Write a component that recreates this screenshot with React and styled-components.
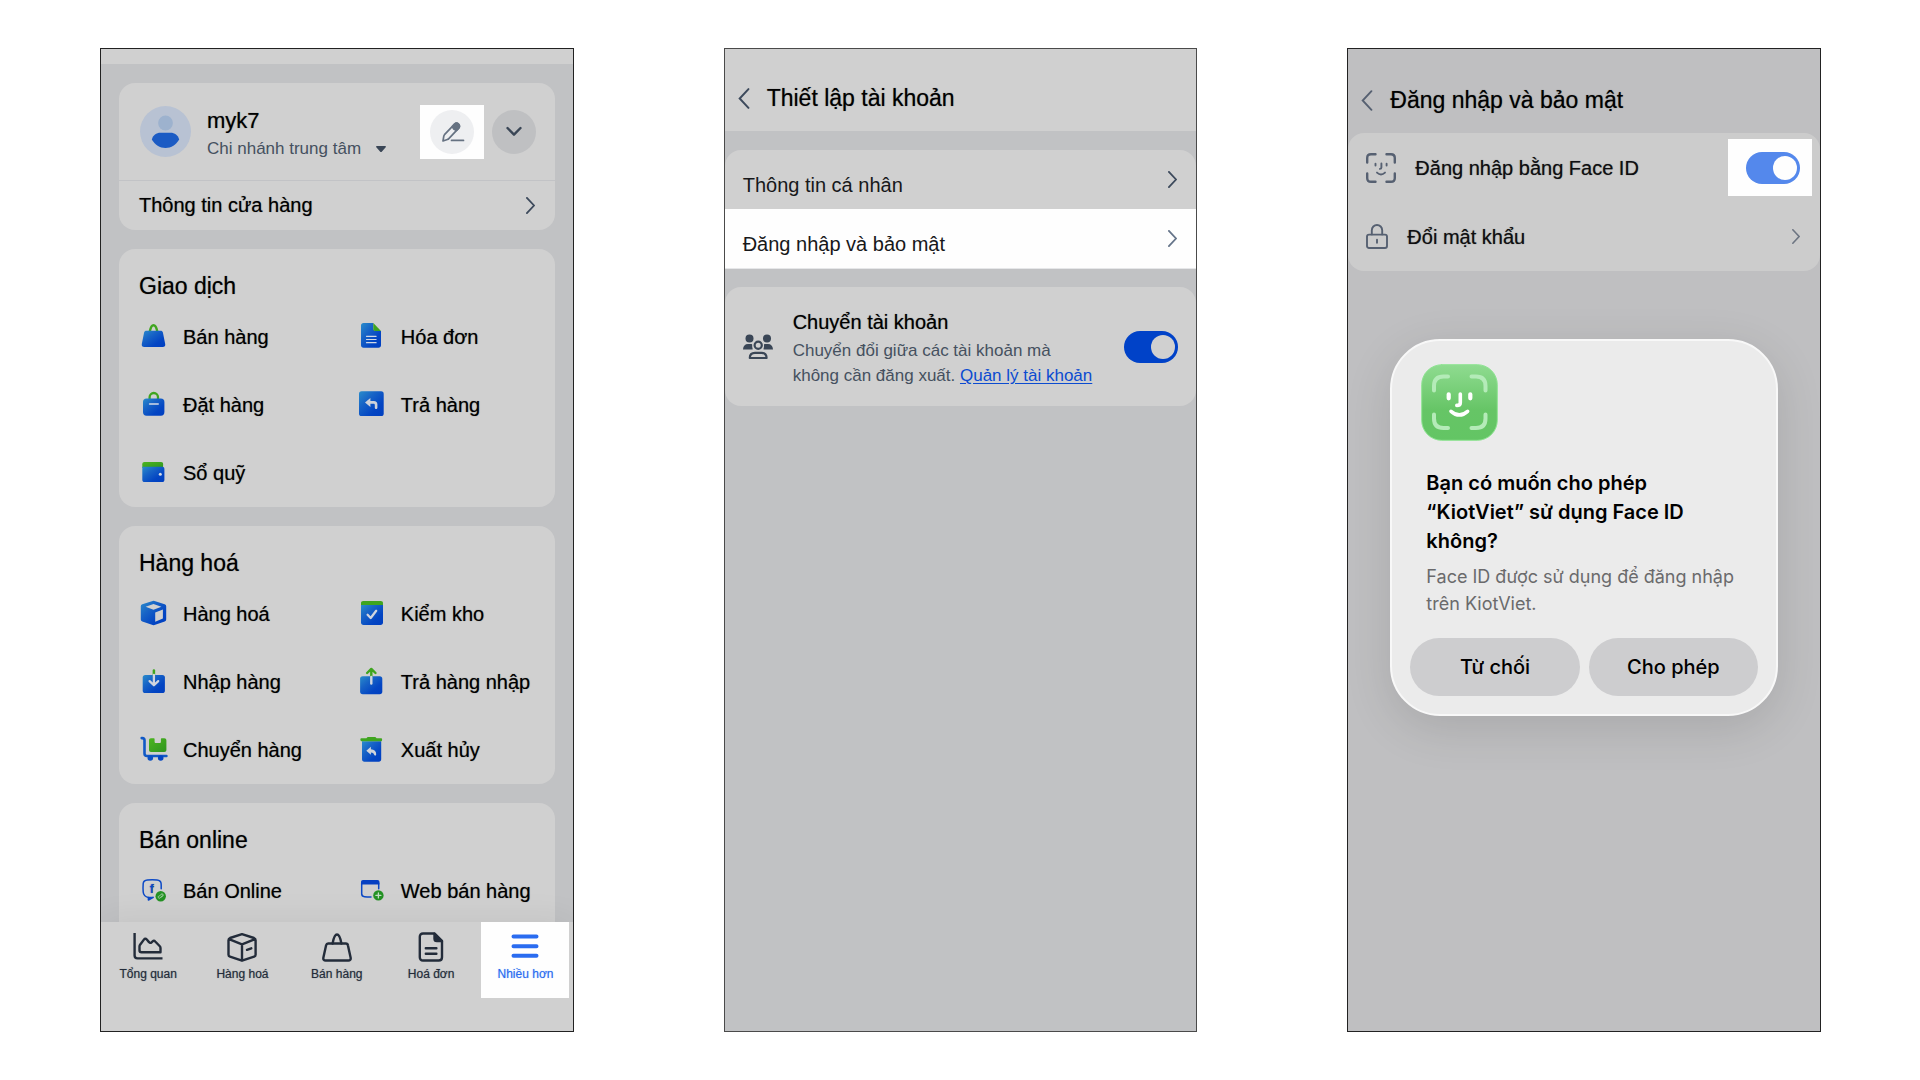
import React, { useState } from 'react';
import styled, { createGlobalStyle, css } from 'styled-components';

const GlobalStyle = createGlobalStyle`
  * {
    box-sizing: border-box;
  }

  body {
    margin: 0;
    background: #fff;
    font-family: 'Liberation Sans', Arial, sans-serif;
    color: #000;
  }

  button {
    font-family: inherit;
    color: inherit;
    border: 0;
    padding: 0;
    background: none;
    cursor: pointer;
  }

  a {
    color: inherit;
    text-decoration: none;
  }

  h1, h2, p {
    margin: 0;
    font-weight: 400;
  }

  svg {
    display: block;
    flex-shrink: 0;
  }
`;

const medium = css`
  text-shadow: 0 0 1px rgba(0, 0, 0, 0.5);
`;

const Page = styled.div`
  display: flex;
  gap: 150px;
  height: 100vh;
  padding: 48px 99px 48px 100px;
`;

const Phone = styled.section`
  flex: 1;
  min-width: 0;
  display: flex;
  flex-direction: column;
  overflow: hidden;
  border: 1px solid ${({ $edge }) => $edge || '#4a4a4a'};
  background: ${({ $tone }) => $tone || '#c1c2c4'};
`;

/* store menu */

const StatusStrip = styled.div`
  flex-shrink: 0;
  height: 15px;
  background: #d0d0d0;
`;

const Scroll = styled.main`
  flex: 1;
  min-height: 0;
  overflow: hidden;
  display: flex;
  flex-direction: column;
  gap: 19px;
  padding: 19px 18px 0;
`;

const Card = styled.section`
  flex-shrink: 0;
  border-radius: 16px;
  background: #d0d0d0;
`;

const GroupCard = styled(Card)`
  min-height: 258px;
`;

const Profile = styled.div`
  display: flex;
  align-items: center;
  height: 98px;
  padding: 0 19px 0 21px;
  border-bottom: 1px solid #c2c3c6;
`;

const ProfileText = styled.div`
  flex: 1;
  padding: 6px 0 0 16px;
`;

const UserName = styled.h1`
  ${medium}
  font-size: 22px;
  line-height: 28px;
`;

const Branch = styled.button`
  display: flex;
  align-items: center;
  gap: 15px;
  font-size: 17px;
  line-height: 28px;
  color: #45505f;
`;

const Spotlight = styled.div`
  display: flex;
  align-items: center;
  justify-content: center;
  width: 64px;
  height: 54px;
  background: #fefefe;
`;

const SwitchSpotlight = styled(Spotlight)`
  width: 84px;
  height: 57px;
  padding-left: 6px;
`;

const RoundButton = styled.button`
  width: 44px;
  height: 44px;
  border-radius: 50%;
  background: ${({ $light }) => ($light ? '#eeeff1' : '#bfc0c2')};
`;

const ProfileActions = styled.div`
  display: flex;
  align-items: center;
  gap: 8px;
`;

const StoreInfo = styled.a`
  ${medium}
  display: flex;
  align-items: center;
  justify-content: space-between;
  height: 49px;
  padding: 0 20px;
  font-size: 20px;
`;

const GroupTitle = styled.h2`
  ${medium}
  padding: 21px 20px 0;
  font-size: 23px;
  line-height: 33px;
`;

const Grid = styled.div`
  display: grid;
  grid-template-columns: 1fr 1fr;
  grid-auto-rows: 68px;
`;

const Item = styled.a`
  ${medium}
  display: flex;
  align-items: center;
  gap: 14px;
  padding-left: 20px;
  font-size: 20px;
  white-space: nowrap;
`;

const TabBar = styled.nav`
  flex-shrink: 0;
  display: flex;
  height: 109px;
  background: #d0d0d0;
  box-shadow: 0 0 32px rgba(0, 0, 0, 0.08);
`;

const TabCell = styled.div`
  flex: 1;
  display: flex;
  justify-content: center;
`;

const Tab = styled.a`
  display: flex;
  flex-direction: column;
  align-items: center;
  gap: 4px;
  width: 88px;
  height: 76px;
  padding-top: 10px;
  font-size: 12px;
  line-height: 16px;
  color: ${({ $active }) => ($active ? '#2a6cf0' : '#232c3a')};
  background: ${({ $active }) => ($active ? '#fefefe' : 'none')};
  text-shadow: 0 0 1px ${({ $active }) => ($active ? 'rgba(42, 108, 240, 0.5)' : 'rgba(35, 44, 58, 0.5)')};
`;

/* settings screens */

const Header = styled.header`
  flex-shrink: 0;
  display: flex;
  align-items: center;
  gap: 17px;
  height: ${({ $plain }) => ($plain ? 84 : 82)}px;
  padding: ${({ $plain }) => ($plain ? 18 : 16)}px 13px 0;
  background: ${({ $plain }) => ($plain ? 'none' : '#d0d0d0')};
`;

const HeaderTitle = styled.h1`
  ${medium}
  font-size: 23px;
  line-height: 32px;
`;

const Settings = styled.main`
  display: flex;
  flex-direction: column;
  gap: 18px;
  padding-top: 19px;
`;

const Panel = styled.section`
  overflow: hidden;
  border-radius: ${({ $open }) => ($open ? '16px 16px 0 0' : '16px')};
  background: ${({ $tone }) => $tone || '#d0d0d0'};
`;

const LinkRow = styled.a`
  display: flex;
  align-items: center;
  justify-content: space-between;
  height: ${({ $lit }) => ($lit ? 60 : 59)}px;
  padding: 0 19px 0 18px;
  font-size: 20px;
  color: #17181a;
  background: ${({ $lit }) => ($lit ? '#fefefe' : 'none')};
  border-bottom: ${({ $lit }) => ($lit ? '1px solid #e6e7e9' : '0')};
`;

const LinkLabel = styled.span`
  padding-top: 11px;
`;

const SwitchAccount = styled.div`
  display: flex;
  align-items: center;
  gap: 20px;
  padding: 19px 18px 18px;
`;

const SwitchText = styled.div`
  flex: 1;
  font-size: 17px;
  line-height: 25px;
  color: #45505f;
`;

const SwitchTitle = styled.label`
  ${medium}
  display: block;
  font-size: 20px;
  line-height: 32px;
  color: #000;
`;

const ManageLink = styled.a`
  color: #0b4bd0;
  text-decoration: underline;
  text-underline-offset: 2px;
`;

const Toggle = styled.input.attrs({ type: 'checkbox', role: 'switch' })`
  appearance: none;
  display: flex;
  align-items: center;
  justify-content: ${({ checked }) => (checked ? 'flex-end' : 'flex-start')};
  width: 54px;
  height: 32px;
  margin: 0;
  padding: 0 3px;
  border-radius: 16px;
  background: ${({ $color }) => $color};
  cursor: pointer;

  &::before {
    content: '';
    width: 24px;
    height: 24px;
    border-radius: 50%;
    background: ${({ $knob }) => $knob};
  }
`;

const SecurityRow = styled.div`
  display: flex;
  align-items: center;
  gap: 19px;
  height: 69px;
  padding: 0 ${({ $tight }) => ($tight ? 8 : 20)}px 0 18px;
  font-size: 20px;
  color: #0e0e10;
`;

const SecurityLabel = styled.label`
  ${medium}
  flex: 1;
  padding-top: 2px;
`;

const PasswordLink = styled(SecurityRow).attrs({ as: 'a', href: '#doi-mat-khau' })``;

/* permission dialog */

const Dialog = styled.div`
  margin: 68px 42px 0;
  padding: 23px 18px 18px;
  border: 2px solid #f8f8f8;
  border-radius: 50px;
  background: #ebebeb;
  box-shadow: 0 12px 48px rgba(0, 0, 0, 0.12);
  font-family: Inter, sans-serif;
`;

const AppIcon = styled.div`
  padding-left: 11px;
`;

const DialogTitle = styled.h2`
  padding: 28px 16px 0;
  font-size: 20px;
  font-weight: 600;
  line-height: 29px;
`;

const DialogText = styled.p`
  padding: 7px 16px 0;
  font-size: 18px;
  line-height: 27px;
  color: #6a6a6c;
`;

const DialogButtons = styled.div`
  display: flex;
  gap: 9px;
  padding-top: 21px;
`;

const DialogButton = styled.button`
  flex: 1;
  height: 58px;
  border-radius: 29px;
  background: #cdcdcf;
  font-size: 20px;
  font-weight: 500;
`;

/* icons */

const Defs = styled.svg.attrs({ width: 0, height: 0, 'aria-hidden': true })`
  position: absolute;
`;

const Gradients = () => (
  <Defs>
    <defs>
      <linearGradient id="blue" x1="0" y1="0" x2="1" y2="1">
        <stop offset="0" stopColor="#2a8ccb" />
        <stop offset="0.35" stopColor="#1763c6" />
        <stop offset="0.7" stopColor="#0345c3" />
        <stop offset="1" stopColor="#003fc0" />
      </linearGradient>
      <linearGradient id="green" x1="0" y1="0" x2="1" y2="1">
        <stop offset="0" stopColor="#4cb51f" />
        <stop offset="1" stopColor="#2f9420" />
      </linearGradient>
      <linearGradient id="faceId" x1="0" y1="0" x2="0" y2="1">
        <stop offset="0" stopColor="#8fdb90" />
        <stop offset="0.6" stopColor="#66c566" />
        <stop offset="1" stopColor="#63c564" />
      </linearGradient>
    </defs>
  </Defs>
);

const Icon = ({ size = 30, box = 30, children }) => (
  <svg width={size} height={size} viewBox={`0 0 ${box} ${box}`} fill="none" strokeLinecap="round" strokeLinejoin="round" aria-hidden="true">
    {children}
  </svg>
);

const Chevron = ({ width = 9, height = 17, back, color = '#3d4a5c', weight = 1.8 }) => (
  <svg width={width} height={height} viewBox="0 0 9 17" fill="none" stroke={color} strokeWidth={weight} strokeLinecap="round" aria-hidden="true">
    <path d={back ? 'M8.1 .9 1 8.500l7.100 7.600' : 'M.9 .9 8 8.500.9 16.100'} />
  </svg>
);

const itemIcons = {
  sell: (
    <>
      <path d="M10.800 9.500c.8-4 2-6.300 3.700-6.300s3 2.300 3.800 6.300" stroke="#3fa51f" strokeWidth="2.400" />
      <path d="M7.500 8.700h14c1.300 0 2.100.6 2.400 1.800l2.300 11.500c.4 2-.6 3-2.400 3H5.200c-1.800 0-2.800-1-2.400-3L5.100 10.500c.3-1.200 1.100-1.800 2.400-1.800z" fill="url(#blue)" />
    </>
  ),
  invoice: (
    <>
      <path d="M6.500 1h9.800v5.500c0 1.500 1 2.500 2.500 2.500H24v14.200c0 1.500-1 2.500-2.500 2.500h-15C5 25.700 4 24.700 4 23.200V3.500C4 2 5 1 6.500 1z" fill="url(#blue)" />
      <path d="M16.300 1 24 9h-6c-1.100 0-1.700-.6-1.700-1.700z" fill="#3fa51f" />
      <path d="M9.500 14.300h9.600M9.500 17.500h9.600M9.500 20.700h9.600" stroke="#cfd8e6" strokeWidth="1.200" />
    </>
  ),
  order: (
    <>
      <path d="M10.600 9.500V7.200a4.200 4.200 0 0 1 8.400 0v2.300" stroke="#3fa51f" strokeWidth="2.300" />
      <rect x="4" y="8.400" width="21.400" height="17.300" rx="3.600" fill="url(#blue)" />
      <path d="M10.600 14h8.600" stroke="#d3dae6" strokeWidth="1.600" />
    </>
  ),
  giveBack: (
    <>
      <rect x="2" y="1.300" width="24.700" height="24.700" rx="2.600" fill="url(#blue)" />
      <path d="M8 12.500 13.400 8v3h3.400c2.400 0 3.600 1.200 3.600 3.600v3.200c0 1.700-2.600 1.700-2.600 0v-2.600c0-1-.4-1.400-1.400-1.400h-3v3.200z" fill="#d0d3da" />
    </>
  ),
  fund: (
    <>
      <path d="M5.500 4h16.700c1.200 0 1.900.7 1.900 1.900v4H3.300V6.200C3.300 4.800 4.100 4 5.500 4z" fill="url(#green)" />
      <path d="M3.300 8.700h19.900c1.400 0 2.200.8 2.200 2.200v10.800c0 1.500-.8 2.300-2.200 2.300H5.500c-1.400 0-2.200-.8-2.200-2.300z" fill="url(#blue)" />
      <circle cx="21.300" cy="16.300" r="1.500" fill="#d6dce6" />
    </>
  ),
  goods: (
    <>
      <path d="M13.700 1.900q.9-.3 1.800 0l10.200 3.300q1.500.6 1.500 2.100v13.300q0 1.500-1.500 2L15.500 26q-.9.3-1.800 0L3.300 22.600q-1.500-.5-1.500-2V7.300q0-1.500 1.500-2.100z" fill="url(#blue)" />
      <path d="M14.500 4.900 22.400 7.700l-7.900 3.100-7.900-3.100zM16.200 13.600l7.700-3v9l-7.700 3.100z" fill="#d0d0d0" />
    </>
  ),
  check: (
    <>
      <path d="M4 5.700h22v17.800c0 1.600-.9 2.500-2.500 2.500h-17C4.900 26 4 25.100 4 23.500z" fill="url(#blue)" />
      <path d="M6.300 2h17.400C25.200 2 26 2.800 26 4.200v1.700H4V4.200C4 2.800 4.800 2 6.300 2z" fill="#3fa51f" />
      <path d="m10.600 15.800 3.100 3.200 5.500-7.200" stroke="#d0d5df" strokeWidth="2.300" />
    </>
  ),
  receive: (
    <>
      <rect x="3.700" y="8" width="22.200" height="18" rx="2.600" fill="url(#blue)" />
      <path d="M14.900 3.400V8" stroke="#3fa51f" strokeWidth="2.500" />
      <path d="M14.900 8v9.700m-4.300-3.600 4.300 4.200 4.300-4.200" stroke="#d0d5df" strokeWidth="2.300" />
    </>
  ),
  sendBack: (
    <>
      <rect x="3.100" y="9.200" width="22.200" height="18" rx="2.600" fill="url(#blue)" />
      <path d="M14.300 9.200V2m-4.200 4 4.200-4.100L18.500 6" stroke="#3fa51f" strokeWidth="2.400" />
      <path d="M14.300 10v6.600" stroke="#d0d5df" strokeWidth="2.400" />
    </>
  ),
  move: (
    <>
      <path d="M2.700 3.100h.6c1.400 0 2.200.8 2.200 2.200v13.200c0 1.700.8 2.500 2.500 2.500h19.400" stroke="#1159c6" strokeWidth="2.600" />
      <circle cx="11.300" cy="23" r="2.800" fill="#0a50c5" />
      <circle cx="21.700" cy="23" r="2.800" fill="#0345c3" />
      <path d="M12 3.300h2.600c.7 0 1 .4 1 1v2.400c0 .9.500 1.400 1.300 1.400h3.700c.8 0 1.300-.5 1.300-1.400V4.300c0-.6.3-1 1-1h2.300c1.400 0 2.200.8 2.200 2.200v9.300c0 1.400-.8 2.200-2.200 2.200H12c-1.300 0-2-.8-2-2.200V5.500c0-1.400.7-2.200 2-2.200z" fill="url(#green)" />
    </>
  ),
  discard: (
    <>
      <path d="M5 6.300h19.200v18c0 1.600-.9 2.400-2.400 2.400H7.400C5.900 26.700 5 25.900 5 24.300z" fill="url(#blue)" />
      <path d="M4.300 3.200h5.200c.4-.8.9-1.200 1.700-1.200h6.600c.8 0 1.300.4 1.700 1.200h4.700c.6 0 .9.4.9 1v.6c0 1-.5 1.500-1.500 1.500H5.300c-1 0-1.800-.6-1.900-1.600v-.5c0-.6.3-1 .9-1z" fill="#3fa51f" />
      <path d="m9.300 15.700 4.600-3.900v2.400c3.500.2 5.300 2 5.300 5.100 0 1.700-1.800 1.800-2.200.3-.3-1.300-1.300-2-3.100-2v2.200z" fill="#d0d3da" />
    </>
  ),
  online: (
    <>
      <path d="M14.200 21.300 9.400 24v-2.600c-3.600-.6-4.900-2-5.200-5.400-.3-3.200-.2-6 0-8.500.2-2.400 1.500-3.200 4.200-3.500 3.200-.4 6.400-.4 9.600 0 2.700.3 3.900 1.100 4.100 3.500.1 1.500.2 3.200.1 5.200" stroke="#0b49c6" strokeWidth="1.500" />
      <path d="M9 20.800h5.300L9.700 23.800z" fill="#0b49c6" />
      <text x="10.800" y="16.800" fontFamily="Liberation Sans, sans-serif" fontWeight="700" fontSize="12" fill="#0b49c6">f</text>
      <circle cx="21.700" cy="20.200" r="5.200" fill="#249224" />
      <path d="m20.300 20.200 1.700-1.900c1.300-1.300 3 .4 1.800 1.700l-1 1m.1-1.100-1.600 1.900c-1.300 1.300-3-.4-1.800-1.700" stroke="#a6d1a6" strokeWidth="1" />
    </>
  ),
  web: (
    <>
      <path d="M4.700 7v10.700c0 1.800.9 2.800 2.800 3 2.200.2 4.200.2 6.500.2M21.700 7v5.700" stroke="#0b49c6" strokeWidth="1.500" />
      <path d="M6 4h14.500c1.200 0 1.900.7 1.900 1.900v2.500H4V6c0-1.300.7-2 2-2z" fill="#0640c2" />
      <circle cx="21.400" cy="19.400" r="5.200" fill="#249224" />
      <path d="M18.900 19.400h5M21.400 16.900v5" stroke="#c3ddc3" strokeWidth="1.300" />
    </>
  ),
};

const tabIcons = {
  overview: (
    <g stroke="currentColor" strokeWidth="2.400" strokeLinecap="butt">
      <path d="M1.600 1v22.500c0 2 .9 2.900 2.900 2.900h25" />
      <path d="M6.500 14.600c0-.8.200-1.300.6-1.900l3.800-5.100c.9-1.200 1.900-1.200 2.900-.1l2.200 2.600c.8 1 1.700 1 2.600.2l1-.9c1-.9 1.700-.9 2.600.1l4.400 4.500c.6.600.9 1.100.9 1.900v4.300h-19c-1.400 0-2-.6-2-2z" />
    </g>
  ),
  goods: (
    <g stroke="currentColor" strokeWidth="2.400">
      <path d="M15 2.200 27 6q1.600.6 1.600 2.200v14.500q0 1.500-1.500 2L15 28.700 3 24.700q-1.500-.5-1.500-2V8.200Q1.500 6.600 3 6zM2 7.200l13 5.100 13-5.100M15 12.300v16.200" />
      <path d="m20 17.800 4.300-1.500" />
    </g>
  ),
  sell: (
    <g stroke="currentColor" strokeWidth="2.400">
      <path d="M6.200 11.500h17.600c1.200 0 1.900.5 2.100 1.700l2.700 12.400c.4 1.900-.5 2.900-2.300 2.900H3.700c-1.800 0-2.700-1-2.300-2.900l2.700-12.400c.3-1.200 1-1.700 2.100-1.700z" />
      <path d="M10.600 11.500c1-5.600 2.300-9 4.400-9s3.400 3.400 4.400 9" />
    </g>
  ),
  invoice: (
    <g stroke="currentColor" strokeWidth="2.400">
      <path d="M7 1.500h11.500L26 9v16.200c0 2.100-1.200 3.300-3.300 3.300H7c-2 0-3.200-1.200-3.200-3.300V4.800C3.800 2.700 5 1.500 7 1.500z" />
      <path d="M18.500 1.700v5c0 1.500.9 2.300 2.300 2.300H26z" fill="currentColor" />
      <path d="M9.800 16.200h10.600M9.800 21.800h10.600" />
    </g>
  ),
  more: <path d="M3.500 4.500h23M3.500 14.200h23M3.500 23.700h23" stroke="currentColor" strokeWidth="4" />,
};

const groups = [
  {
    title: 'Giao dịch',
    items: [
      ['sell', 'Bán hàng'],
      ['invoice', 'Hóa đơn'],
      ['order', 'Đặt hàng'],
      ['giveBack', 'Trả hàng'],
      ['fund', 'Sổ quỹ'],
    ],
  },
  {
    title: 'Hàng hoá',
    items: [
      ['goods', 'Hàng hoá'],
      ['check', 'Kiểm kho'],
      ['receive', 'Nhập hàng'],
      ['sendBack', 'Trả hàng nhập'],
      ['move', 'Chuyển hàng'],
      ['discard', 'Xuất hủy'],
    ],
  },
  {
    title: 'Bán online',
    items: [
      ['online', 'Bán Online'],
      ['web', 'Web bán hàng'],
    ],
  },
];

const tabs = [
  ['overview', 'Tổng quan'],
  ['goods', 'Hàng hoá'],
  ['sell', 'Bán hàng'],
  ['invoice', 'Hoá đơn'],
  ['more', 'Nhiều hơn'],
];

function MenuScreen() {
  return (
    <Phone $edge="#222">
      <StatusStrip />
      <Scroll>
        <Card>
          <Profile>
            <Icon size={51} box={51}>
              <circle cx="25.500" cy="25.500" r="25.500" fill="#b8c2d3" />
              <circle cx="25.500" cy="17" r="7.400" fill="#9db2ce" />
              <path d="M11.800 33.500c1.200-4.500 4.500-6.800 8.700-6.800h10c4.200 0 7.500 2.300 8.700 6.800-3 5-8 8.500-13.700 8.500s-10.700-3.500-13.700-8.500z" fill="#1b5bc4" />
            </Icon>
            <ProfileText>
              <UserName>myk7</UserName>
              <Branch>
                Chi nhánh trung tâm
                <svg width="10" height="6" viewBox="0 0 10 6" aria-hidden="true">
                  <path d="M.8 0h8.400c.7 0 1 .7.5 1.200L6 5.400c-.6.7-1.400.7-2 0L.3 1.200C-.2.7.1 0 .8 0z" fill="#3a4656" />
                </svg>
              </Branch>
            </ProfileText>
            <ProfileActions>
              <Spotlight>
                <RoundButton $light aria-label="Sửa">
                  <Icon size={44} box={44}>
                    <g stroke="#667282" strokeWidth="1.700">
                      <path d="m13 31 .8-4.800c.1-.6.3-1 .7-1.500l9.800-10.300c1.300-1.300 2.900-1.500 4.200-.3 1.300 1.200 1.300 2.900 0 4.300l-9.700 10.200c-.4.500-.8.7-1.400.9z" />
                      <path d="m22.300 16.600 2-2.200c1.300-1.300 2.900-1.500 4.200-.3 1.300 1.200 1.300 2.900 0 4.300l-2 2.100q-3.200-.8-4.200-3.900z" fill="#667282" />
                      <path d="M21.500 30.400h12" />
                    </g>
                  </Icon>
                </RoundButton>
              </Spotlight>
              <RoundButton aria-label="Mở rộng">
                <Icon size={44} box={44}>
                  <path d="m15.500 18 6.500 6.700 6.500-6.700" stroke="#3a4656" strokeWidth="2.400" />
                </Icon>
              </RoundButton>
            </ProfileActions>
          </Profile>
          <StoreInfo href="#cua-hang">
            Thông tin cửa hàng
            <Chevron />
          </StoreInfo>
        </Card>
        {groups.map((group) => (
          <GroupCard key={group.title}>
            <GroupTitle>{group.title}</GroupTitle>
            <Grid>
              {group.items.map(([icon, label]) => (
                <Item href={'#' + icon} key={icon}>
                  <Icon>{itemIcons[icon]}</Icon>
                  {label}
                </Item>
              ))}
            </Grid>
          </GroupCard>
        ))}
      </Scroll>
      <TabBar>
        {tabs.map(([icon, label]) => (
          <TabCell key={icon}>
            <Tab href={'#tab-' + icon} $active={icon === 'more'}>
              <Icon>{tabIcons[icon]}</Icon>
              {label}
            </Tab>
          </TabCell>
        ))}
      </TabBar>
    </Phone>
  );
}

function AccountScreen() {
  const [multi, setMulti] = useState(true);

  return (
    <Phone>
      <Header>
        <button aria-label="Quay lại">
          <Chevron back width={12} height={21} weight={1.6} />
        </button>
        <HeaderTitle>Thiết lập tài khoản</HeaderTitle>
      </Header>
      <Settings>
        <Panel $open>
          <LinkRow href="#ca-nhan">
            <LinkLabel>Thông tin cá nhân</LinkLabel>
            <Chevron />
          </LinkRow>
          <LinkRow href="#bao-mat" $lit>
            <LinkLabel>Đăng nhập và bảo mật</LinkLabel>
            <Chevron color="#66758a" />
          </LinkRow>
        </Panel>
        <Panel>
          <SwitchAccount>
            <Icon>
              <g fill="#3a4656">
                <circle cx="6.500" cy="6.600" r="4" />
                <circle cx="24" cy="6.600" r="4" />
                <path d="M0 17.200c.3-3.200 2-5.200 5-5.200h3c1 0 1.300.3 1.200 1.200-.1 1.200 0 2.300.4 3.300.2.700 0 1-.6 1H.5c-.3 0-.5-.1-.5-.3zM30 17.200c-.3-3.200-2-5.200-5-5.200h-2.800c-1 0-1.300.3-1.200 1.200.1 1.200 0 2.300-.4 3.300-.2.700 0 1 .6 1h8.300c.3 0 .5-.1.5-.3z" />
              </g>
              <g stroke="#3a4656" strokeWidth="2.200">
                <circle cx="15.200" cy="13.200" r="3.600" />
                <path d="M6.800 26c0-3.400 2-5.200 5.200-5.200h6.400c3.200 0 5.200 1.800 5.200 5.200z" />
              </g>
            </Icon>
            <SwitchText>
              <SwitchTitle htmlFor="multi-account">Chuyển tài khoản</SwitchTitle>
              Chuyển đổi giữa các tài khoản mà
              <br />
              không cần đăng xuất. <ManageLink href="#quan-ly">Quản lý tài khoản</ManageLink>
            </SwitchText>
            <Toggle
              id="multi-account"
              checked={multi}
              onChange={() => setMulti(!multi)}
              $color="#0042c8"
              $knob="#d0d0d0"
            />
          </SwitchAccount>
        </Panel>
      </Settings>
    </Phone>
  );
}

function SecurityScreen() {
  const [faceId, setFaceId] = useState(true);

  return (
    <Phone $edge="#222" $tone="#bfbfc1">
      <Header $plain>
        <button aria-label="Quay lại">
          <Chevron back width={12} height={21} weight={1.5} color="#566071" />
        </button>
        <HeaderTitle>Đăng nhập và bảo mật</HeaderTitle>
      </Header>
      <Panel $tone="#cccccc">
        <SecurityRow $tight>
          <Icon>
            <path d="M1.200 9.500V5q0-3.800 3.800-3.800h4.500M20.500 1.200H25q3.800 0 3.800 3.800v4.500M28.800 20.500V25q0 3.800-3.800 3.800h-4.500M9.500 28.800H5q-3.800 0-3.800-3.800v-4.500" stroke="#566071" strokeWidth="2.400" />
            <path d="M9.500 10.800v1.800M20.600 10.800v1.800M15.400 10.500v4q0 1.400-1.500 1.400M11 19.600q4 3.700 8 0" stroke="#566071" strokeWidth="1.900" />
          </Icon>
          <SecurityLabel htmlFor="face-id">Đăng nhập bằng Face ID</SecurityLabel>
          <SwitchSpotlight>
            <Toggle
              id="face-id"
              checked={faceId}
              onChange={() => setFaceId(!faceId)}
              $color="#5488ec"
              $knob="#fefefe"
            />
          </SwitchSpotlight>
        </SecurityRow>
        <PasswordLink>
          <svg width="22" height="25" viewBox="0 0 22 25" fill="none" stroke="#566071" strokeWidth="1.900" strokeLinecap="round" aria-hidden="true">
            <rect x="1" y="10.600" width="20" height="13.400" rx="2" />
            <path d="M5.800 10.400V6.200a5.200 5.200 0 0 1 10.400 0v4.200M11 15.700v3" />
          </svg>
          <SecurityLabel as="span">Đổi mật khẩu</SecurityLabel>
          <Chevron width={8} height={15} color="#6d7582" />
        </PasswordLink>
      </Panel>
      <Dialog role="dialog" aria-labelledby="permission-title">
        <AppIcon>
          <Icon size={77} box={77}>
            <rect x=".7" y=".7" width="75.600" height="75.600" rx="20" fill="url(#faceId)" stroke="#8fe493" strokeWidth="1" />
            <path d="M13 26.500V22q0-9.500 9.500-9.500H27M50.500 12.500H55q9.500 0 9.500 9.500v4.500M64.500 50.500V54.500q0 9.500-9.500 9.500h-4.500M27 64h-4.500Q13 64 13 54.500V50.500" stroke="#b4ebb8" strokeWidth="4" />
            <g stroke="#fff" strokeWidth="3.600">
              <path d="M27.700 30.300v4M49.300 30.300v4" strokeWidth="4.200" />
              <path d="M39.300 30v8.700q0 2.700-3.500 2.700" />
              <path d="M30 47.300q8.400 7.300 16.600 0" />
            </g>
          </Icon>
        </AppIcon>
        <DialogTitle id="permission-title">
          Bạn có muốn cho phép
          <br />
          “KiotViet” sử dụng Face ID
          <br />
          không?
        </DialogTitle>
        <DialogText>
          Face ID được sử dụng để đăng nhập
          <br />
          trên KiotViet.
        </DialogText>
        <DialogButtons>
          <DialogButton>Từ chối</DialogButton>
          <DialogButton>Cho phép</DialogButton>
        </DialogButtons>
      </Dialog>
    </Phone>
  );
}

function App() {
  return (
    <>
      <GlobalStyle />
      <Gradients />
      <Page>
        <MenuScreen />
        <AccountScreen />
        <SecurityScreen />
      </Page>
    </>
  );
}

export default App;
